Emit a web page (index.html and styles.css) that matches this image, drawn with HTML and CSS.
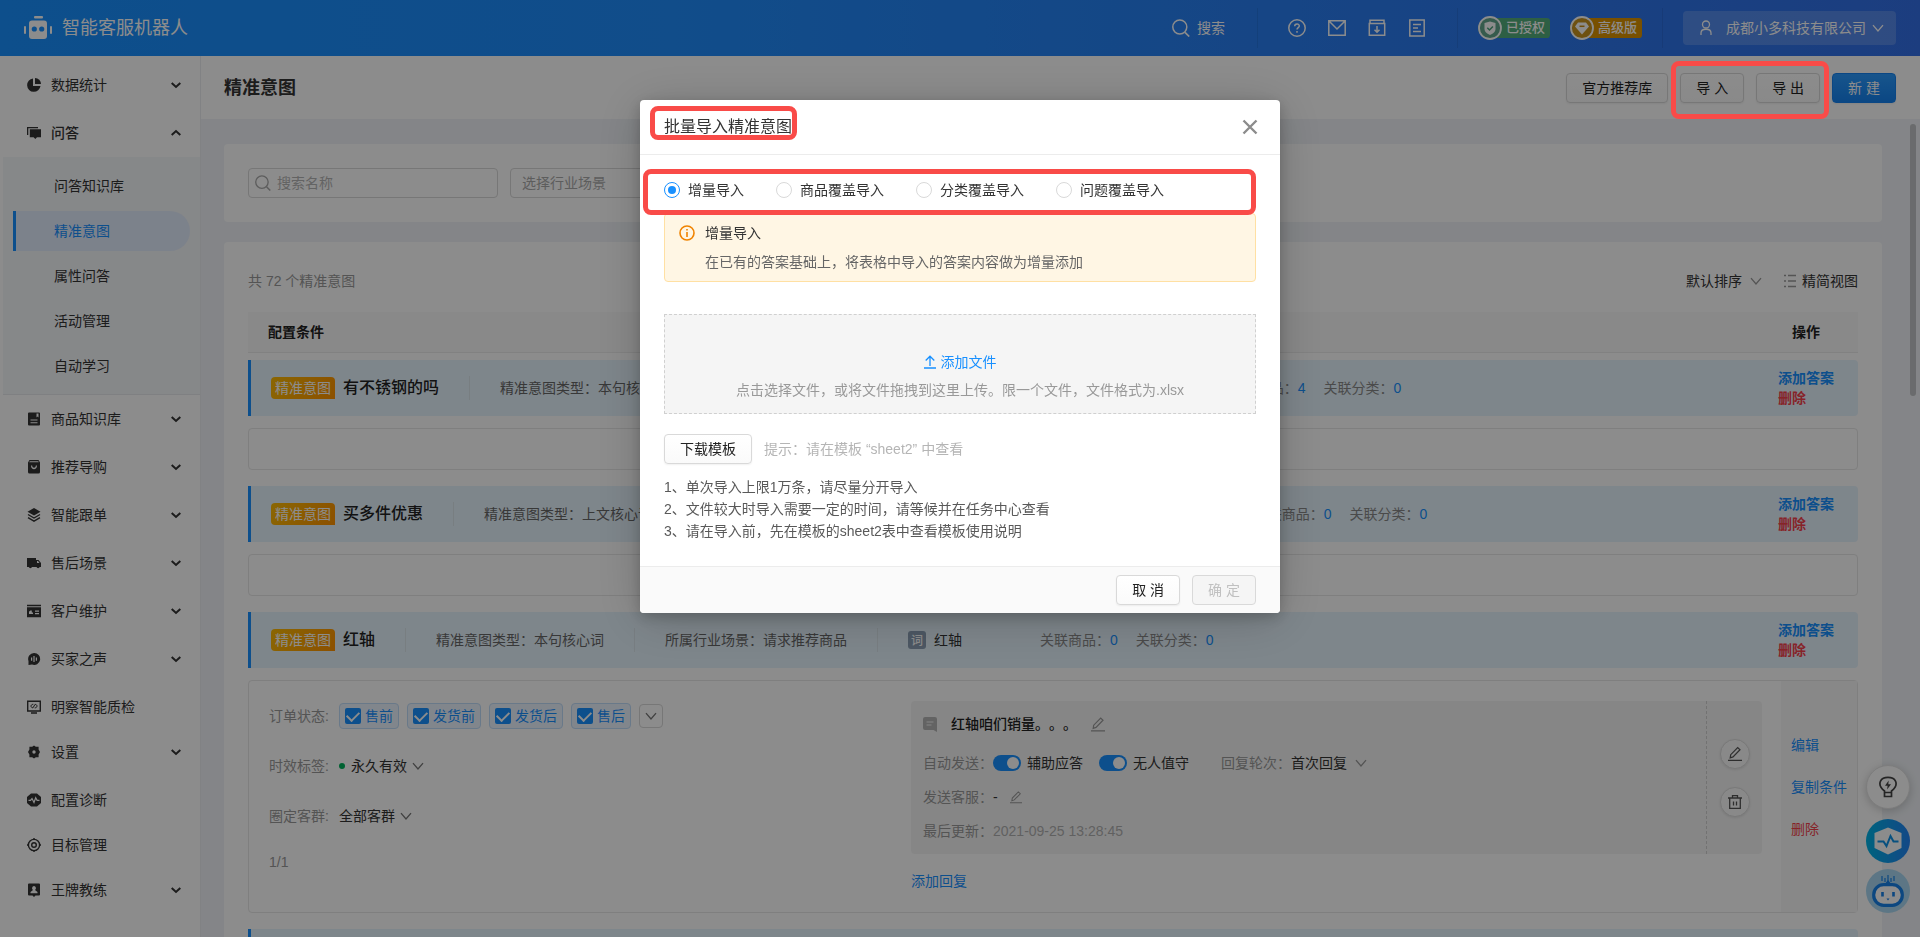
FILE: index.html
```html
<!DOCTYPE html>
<html lang="zh-CN">
<head>
<meta charset="utf-8">
<title>智能客服机器人 - 精准意图</title>
<link rel="stylesheet" href="styles.css">
</head>
<body>
<svg class="sprite" aria-hidden="true">
  <symbol id="down" viewBox="0 0 12 12"><path d="M1 3.2 6 9l5-5.8" fill="none" stroke="currentColor" stroke-width="1.3"/></symbol>
  <symbol id="caret" viewBox="0 0 12 12"><path d="M1.7 4 6 8l4.300-4" fill="none" stroke="currentColor" stroke-width="2"/></symbol>
  <symbol id="edit" viewBox="0 0 14 15"><path d="M2.200 11.800 2.700 8.700 9.700 1.500l2.300 2.200-7 7.200zM0 14.300h14" fill="none" stroke="currentColor" stroke-width="1.200"/></symbol>
  <symbol id="search" viewBox="0 0 18 18"><circle cx="7.800" cy="8" r="7" fill="none" stroke="currentColor" stroke-width="1.500"/><path d="m13 13.300 4.200 4.200" stroke="currentColor" stroke-width="1.700"/></symbol>
</svg>

<div class="app">
  <header class="topbar">
    <svg class="logo" viewBox="0 0 28 24"><g fill="#fff"><rect x="10" y="0" width="9" height="2.500" rx="1"/><rect x="5" y="4.500" width="18" height="18.500" rx="3"/><rect x="0" y="10" width="2" height="8" rx="1"/><rect x="26" y="10" width="2" height="8" rx="1"/></g><circle cx="10.300" cy="13" r="2.600" fill="#1890ff"/><circle cx="17.700" cy="13" r="2.600" fill="#1890ff"/></svg>
    <span class="brand">智能客服机器人</span>
    <button class="top-search"><svg width="18" height="18"><use href="#search"/></svg>搜索</button>
    <i class="top-divider"></i>
    <nav class="top-icons">
      <button aria-label="帮助"><svg viewBox="0 0 18 18"><circle cx="9" cy="9" r="8.200"/><path d="M6.700 7.300c0-3 4.600-3 4.600-.3 0 1.600-2.300 1.700-2.300 3.600M9 12v1.700"/></svg></button>
      <button aria-label="消息"><svg viewBox="0 0 18 18"><path d="M.8 1.800h16.400v14.400H.8zM1 2l8 8 8-8"/></svg></button>
      <button aria-label="下载"><svg viewBox="0 0 18 18"><path d="M1.300 4.500h15.400v11.700H1.300zM2 4.500V1.200h14v3.300M9 7v6M6.500 10.700 9 13.200l2.500-2.500"/></svg></button>
      <button aria-label="文档"><svg viewBox="0 0 18 18"><path d="M1.800 1h14.400v16H1.800zM5 5.500h8M5 9h5M5 12.500h8"/></svg></button>
    </nav>
    <i class="top-divider"></i>
    <div class="badges">
      <span class="badge badge-green"><svg viewBox="0 0 24 24"><circle cx="12" cy="12" r="11" fill="#63a68c" stroke="#fff" stroke-width="1.800"/><path d="M12 5.500 17.500 7v6c0 3-3 5-5.500 6-2.500-1-5.500-3-5.500-6V7z" fill="#fff"/><path d="m9.300 11.800 2.200 2.200 3.400-3.600" fill="none" stroke="#4ca17c" stroke-width="1.500"/></svg>已授权</span>
      <span class="badge badge-gold"><svg viewBox="0 0 24 24"><circle cx="12" cy="12" r="11" fill="#c99420" stroke="#fff" stroke-width="1.800"/><path d="M8 6.500h8l3 4-7 8-7-8z" fill="#fff"/><path d="M9.500 10.300h5" fill="none" stroke="#c98a10" stroke-width="1.500"/></svg>高级版</span>
    </div>
    <i class="top-divider"></i>
    <button class="account"><svg width="12" height="16" viewBox="0 0 12 16" fill="none" stroke="currentColor" stroke-width="1.300"><circle cx="6" cy="4.500" r="3.500"/><path d="M1 15v-2c0-5 10-5 10 0v2"/></svg><span>成都小多科技有限公司</span><svg width="12" height="12"><use href="#down"/></svg></button>
  </header>

  <div class="body">
    <aside class="side">
      <a class="item" href="#"><svg viewBox="0 0 14 14"><path d="M6 .5A6.700 6.700 0 1 0 13.500 8H6z"/><path d="M8 0v6h6A6 6 0 0 0 8 0z"/></svg><span>数据统计</span><svg class="caret"><use href="#caret"/></svg></a>
      <a class="item open" href="#"><svg viewBox="0 0 14 14"><path d="M0 1h11v1.300H1.300V9H0z"/><path d="M2.800 3.200H14v8H10l-1.700 1.800-1.700-1.800H2.800z"/></svg><span>问答</span><svg class="caret"><use href="#caret"/></svg></a>
      <nav class="sub">
        <a href="#">问答知识库</a><a class="active" href="#">精准意图</a><a href="#">属性问答</a><a href="#">活动管理</a><a href="#">自动学习</a>
      </nav>
      <a class="item" href="#"><svg viewBox="0 0 14 14"><path fill-rule="evenodd" d="M2 .5h10a1 1 0 0 1 1 1v11a1 1 0 0 1-1 1H2a1 1 0 0 1-1-1v-11a1 1 0 0 1 1-1zM9.500 1.500v4l1-1 1 1v-4zM3.500 7.500v1h7v-1zM3.500 10.200v1h7v-1z"/></svg><span>商品知识库</span><svg class="caret"><use href="#caret"/></svg></a>
      <a class="item" href="#"><svg viewBox="0 0 14 14"><path fill-rule="evenodd" d="M2.500 0h9L13 2.500V12a1.500 1.500 0 0 1-1.500 1.500h-9A1.500 1.500 0 0 1 1 12V2.500zM2.800 1.300l-.6 1h9.600l-.6-1zM4 5.500c0 5 6 5 6 0H8.800c0 3-3.600 3-3.600 0z"/></svg><span>推荐导购</span><svg class="caret"><use href="#caret"/></svg></a>
      <a class="item" href="#"><svg viewBox="0 0 14 14"><path d="M7 0l6.500 3.700L7 7.500.5 3.700z"/><path d="M1 6.500l6 3.500 6-3.500M1 9.600l6 3.500 6-3.500" fill="none" stroke="currentColor" stroke-width="1.400"/></svg><span>智能跟单</span><svg class="caret"><use href="#caret"/></svg></a>
      <a class="item" href="#"><svg viewBox="0 0 14 14"><path fill-rule="evenodd" d="M0 2h9v2h2.500L14 7v4h-1.300a1.700 1.700 0 0 1-3.200 0H5a1.700 1.700 0 0 1-3.200 0H0zM10 5v2h2.500L11 5z"/></svg><span>售后场景</span><svg class="caret"><use href="#caret"/></svg></a>
      <a class="item" href="#"><svg viewBox="0 0 14 14"><path fill-rule="evenodd" d="M0 .8h14v1.400H0zM0 3.200h14v10H0zM2 8.600c0-2 1.200-1 1.200-2h1.600v2h1.200V10H2zM8 6.500v1.200h4V6.500zM8 9v1.200h4V9z"/></svg><span>客户维护</span><svg class="caret"><use href="#caret"/></svg></a>
      <a class="item" href="#"><svg viewBox="0 0 14 14"><path fill-rule="evenodd" d="M7 1a6 6 0 1 1-2 11.600L1.500 13V9A6 6 0 0 1 7 1zM4 5.500v3.300h1.200V5.500zM6.400 4v6h1.200V4zM8.800 5.500v3.300H10V5.500z"/></svg><span>买家之声</span><svg class="caret"><use href="#caret"/></svg></a>
      <a class="item plain" href="#"><svg class="outline" viewBox="0 0 14 14"><path d="M.7 1.200h12.600v9.800H.7zM4 13h6"/><path d="M6.300 4.300c-3 0-3 3.500-.3 3.500M7.700 7.900c3 0 3-3.500.3-3.500M6 7.800l2-3.400" stroke-width="1"/></svg><span>明察智能质检</span></a>
      <a class="item" href="#"><svg viewBox="0 0 14 14"><path fill-rule="evenodd" d="M7 .6 8.800 1.800h2.800v2.800L13 7l-1.400 2.400v2.800H8.800L7 13.400 5.200 12.200H2.400V9.400L1 7l1.400-2.400V1.800h2.800zM7 5.300a1.700 1.700 0 1 0 0 3.400 1.700 1.700 0 0 0 0-3.400z"/></svg><span>设置</span><svg class="caret"><use href="#caret"/></svg></a>
      <a class="item plain" href="#"><svg viewBox="0 0 14 14"><path d="M4 .5h6L14 4v6l-4 3.500H4L0 10V4z"/><path d="M1.500 7.300h2L5 5.500 7 9.500l1.700-4.700 1.400 2.500h2.400" fill="none" stroke="#fff" stroke-width="1.200"/></svg><span>配置诊断</span></a>
      <a class="item plain" href="#"><svg class="outline" viewBox="0 0 14 14"><circle cx="7" cy="7" r="5.600"/><circle cx="7" cy="7" r="2.300"/><path d="M7 0v1.500M7 12.500V14M0 7h1.500M12.500 7H14"/></svg><span>目标管理</span></a>
      <a class="item" href="#"><svg viewBox="0 0 14 14"><path fill-rule="evenodd" d="M2 .5h10a1 1 0 0 1 1 1v10a1 1 0 0 1-1 1H8.500L7 14l-1.500-1.500H2a1 1 0 0 1-1-1v-10a1 1 0 0 1 1-1zM7 3a2.200 2.200 0 0 0-1 4L3.500 9v1.200h7V9L8 7a2.200 2.200 0 0 0-1-4z"/></svg><span>王牌教练</span><svg class="caret"><use href="#caret"/></svg></a>
    </aside>

    <main class="main">
      <div class="page-head">
        <h1>精准意图</h1>
        <button class="btn">官方推荐库</button>
        <button class="btn">导 入</button>
        <button class="btn">导 出</button>
        <button class="btn primary">新 建</button>
      </div>

      <div class="content">
        <section class="panel filters">
          <label class="field"><svg width="16" height="16"><use href="#search"/></svg><input type="text" placeholder="搜索名称" aria-label="搜索名称"></label>
          <label class="field"><select aria-label="选择行业场景"><option>选择行业场景</option></select></label>
        </section>

        <section class="panel list">
          <div class="list-bar">
            <span class="total">共 72 个精准意图</span>
            <label class="pick"><select aria-label="排序"><option>默认排序</option></select><svg width="12" height="12"><use href="#down"/></svg></label>
            <button class="view"><svg width="12" height="14" viewBox="0 0 12 14" stroke="currentColor" stroke-width="1.300"><path d="M0 1.500h2M4 1.500h8M0 7h2M4 7h8M0 12.500h2M4 12.500h8"/></svg>精简视图</button>
          </div>
          <div class="list-head"><span>配置条件</span><span class="ops">操作</span></div>

          <div class="band">
            <span class="tag">精准意图</span><strong>有不锈钢的吗</strong><i></i>
            <span>精准意图类型：本句核心词</span><i></i><span>所属行业场景：请求推荐商品</span><i></i>
            <em>词</em><span class="word">是不是不锈钢材质 / 钢的</span>
            <span class="rel">关联商品：<a href="#">4</a></span><span class="rel">关联分类：<a href="#">0</a></span>
            <div class="acts"><a href="#">添加答案</a><a class="danger" href="#">删除</a></div>
          </div>
          <div class="empty"></div>

          <div class="band">
            <span class="tag">精准意图</span><strong>买多件优惠</strong><i></i>
            <span>精准意图类型：上文核心词</span><i></i><span>所属行业场景：请求优惠活动</span><i></i>
            <em>词</em><span class="word">买多件有没有优惠 / 多买能优惠</span>
            <span class="rel">关联商品：<a href="#">0</a></span><span class="rel">关联分类：<a href="#">0</a></span>
            <div class="acts"><a href="#">添加答案</a><a class="danger" href="#">删除</a></div>
          </div>
          <div class="empty"></div>

          <div class="band">
            <span class="tag">精准意图</span><strong>红轴</strong><i></i>
            <span>精准意图类型：本句核心词</span><i></i><span>所属行业场景：请求推荐商品</span><i></i>
            <em>词</em><span class="word">红轴</span>
            <span class="rel">关联商品：<a href="#">0</a></span><span class="rel">关联分类：<a href="#">0</a></span>
            <div class="acts"><a href="#">添加答案</a><a class="danger" href="#">删除</a></div>
          </div>
          <div class="detail">
            <div class="detail-main">
              <div class="conds">
                <div class="cond"><span class="lab">订单状态:</span>
                  <label class="chip"><input type="checkbox" checked>售前</label>
                  <label class="chip"><input type="checkbox" checked>发货前</label>
                  <label class="chip"><input type="checkbox" checked>发货后</label>
                  <label class="chip"><input type="checkbox" checked>售后</label>
                  <button class="more" aria-label="更多"><svg width="12" height="12"><use href="#down"/></svg></button>
                </div>
                <div class="cond"><span class="lab">时效标签:</span><b class="dot"></b><label class="pick near"><select aria-label="时效标签"><option>永久有效</option></select><svg width="12" height="12"><use href="#down"/></svg></label></div>
                <div class="cond"><span class="lab">圈定客群:</span><label class="pick near"><select aria-label="圈定客群"><option>全部客群</option></select><svg width="12" height="12"><use href="#down"/></svg></label></div>
                <div class="pages">1/1</div>
              </div>
              <div class="replies">
                <div class="reply">
                  <div class="reply-body">
                    <div class="reply-title"><svg width="14" height="15" viewBox="0 0 14 15"><path d="M2 0h10a2 2 0 0 1 2 2v13l-3.500-2H2a2 2 0 0 1-2-2V2a2 2 0 0 1 2-2z" fill="#b5b5b5"/><path d="M3.500 5h7M3.500 8h5" stroke="#f3f3f3" stroke-width="1.200"/></svg><strong>红轴咱们销量。。。</strong><svg class="pen" width="14" height="16"><use href="#edit"/></svg></div>
                    <div class="line"><span class="lab">自动发送：</span>
                      <label class="toggle"><input type="checkbox" role="switch" checked>辅助应答</label>
                      <label class="toggle"><input type="checkbox" role="switch" checked>无人值守</label>
                      <span class="lab turns">回复轮次：</span><label class="pick"><select aria-label="回复轮次"><option>首次回复</option></select><svg width="12" height="12"><use href="#down"/></svg></label>
                    </div>
                    <div class="line"><span class="lab">发送客服：</span>-<svg class="pen" width="12" height="14"><use href="#edit"/></svg></div>
                    <div class="line faint"><span class="lab">最后更新：</span>2021-09-25 13:28:45</div>
                  </div>
                  <div class="reply-ops">
                    <button aria-label="编辑"><svg width="14" height="15"><use href="#edit"/></svg></button>
                    <button aria-label="删除"><svg width="14" height="14" viewBox="0 0 14 14" fill="none" stroke="currentColor" stroke-width="1.300"><path d="M0 3h14M4.500 3V.7h5V3M1.700 3.500v9.800h10.600V3.500M5.500 6.500v4M8.500 6.500v4"/></svg></button>
                  </div>
                </div>
                <a class="add" href="#">添加回复</a>
              </div>
            </div>
            <div class="detail-ops"><a href="#">编辑</a><a href="#">复制条件</a><a class="danger" href="#">删除</a></div>
          </div>

          <div class="band"></div>
        </section>
      </div>
      <div class="scroll"></div>
    </main>
  </div>

  <div class="floats">
    <button class="float white" aria-label="提示"><svg width="18" height="22" viewBox="0 0 18 22" fill="none" stroke="#444" stroke-width="1.700"><path d="M5.500 15C1 11.500 0 8.500 1.500 5.200 4 .2 14 .2 16.500 5.200 18 8.500 17 11.500 12.500 15v1.500h-7zM5.500 17v3.500h7V17"/><path d="M9.700 4.500 6 9.800h2.600l-.5 3.700L12 8.300H9.300z" fill="#444" stroke="none"/></svg></button>
    <button class="float pulse" aria-label="诊断"><svg width="28" height="28" viewBox="0 0 28 28"><path d="M14 .5 27.500 6v15L14 27.500.5 21V6z" fill="#fff"/><path d="M3.500 14.500h6l3 4.500 4-10 3 5.500h5" fill="none" stroke="#0d93e8" stroke-width="2"/></svg></button>
    <button class="float bot" aria-label="机器人"><svg width="32" height="32" viewBox="0 0 32 32"><path d="M16 0v9M10 1v5M13 3v4M19 3v4M22 1v5" stroke="#1682ea" stroke-width="1.200"/><path d="m12 10 4-5 4 5z" fill="#1682ea"/><rect x="1.700" y="9.700" width="28.600" height="20.600" rx="10" fill="#fff" stroke="#1682ea" stroke-width="3.200"/><path d="M10.500 17v4.500M21.500 17v4.500" stroke="#1682ea" stroke-width="2.600"/><path d="M14.500 23.500h3L16 25.500z" fill="#1682ea"/></svg></button>
  </div>
</div>

<div class="mask">
  <div class="mark mark-actions"></div>
  <section class="modal" role="dialog" aria-modal="true" aria-labelledby="dialog-title">
    <header class="modal-head">
      <h2 id="dialog-title">批量导入精准意图</h2>
      <button class="close" aria-label="关闭"><svg width="16" height="16" viewBox="0 0 16 16"><path d="m1.500 1.500 13 13m0-13-13 13" stroke="#8c8c8c" stroke-width="2.400"/></svg></button>
      <div class="mark mark-title"></div>
    </header>
    <div class="modal-body">
      <div class="modes">
        <label><input type="radio" name="mode" checked>增量导入</label>
        <label><input type="radio" name="mode">商品覆盖导入</label>
        <label><input type="radio" name="mode">分类覆盖导入</label>
        <label><input type="radio" name="mode">问题覆盖导入</label>
        <div class="mark mark-modes"></div>
      </div>
      <div class="notice">
        <svg width="16" height="16" viewBox="0 0 16 16" fill="none" stroke="#f08300" stroke-width="1.600"><circle cx="8" cy="8" r="7"/><path d="M8 7v5M8 4v1.600"/></svg>
        <div><p class="notice-title">增量导入</p><p class="notice-text">在已有的答案基础上，将表格中导入的答案内容做为增量添加</p></div>
      </div>
      <div class="upload">
        <button class="pick-file"><svg width="12" height="14" viewBox="0 0 12 14" fill="none" stroke="currentColor" stroke-width="1.300"><path d="M6 1.500V11M1.700 5.500 6 1.200l4.300 4.300M0 13h12"/></svg>添加文件</button>
        <p>点击选择文件，或将文件拖拽到这里上传。限一个文件，文件格式为.xlsx</p>
      </div>
      <div class="template"><button class="btn">下载模板</button><span>提示：请在模板 “sheet2” 中查看</span></div>
      <div class="notes">
        <p>1、单次导入上限1万条，请尽量分开导入</p>
        <p>2、文件较大时导入需要一定的时间，请等候并在任务中心查看</p>
        <p>3、请在导入前，先在模板的sheet2表中查看模板使用说明</p>
      </div>
    </div>
    <footer class="modal-foot"><button class="btn">取 消</button><button class="btn" disabled>确 定</button></footer>
  </section>
</div>
</body>
</html>
```
FILE: styles.css
```css
* { box-sizing: border-box; }
body {
  margin: 0;
  font: 14px/22px "Liberation Sans", "Noto Sans CJK SC", sans-serif;
  text-spacing-trim: space-all;
  color: #333;
  overflow: hidden;
}
h1, h2, p { margin: 0; }
a { color: #1890ff; text-decoration: none; }
button, input, select { font: inherit; color: inherit; margin: 0; }
button { background: none; border: 0; padding: 0; }
select { appearance: none; border: 0; padding: 0; background: none; }
svg { flex: none; display: block; }
.sprite { position: absolute; width: 0; height: 0; }

.app { height: 100vh; display: flex; flex-direction: column; }
.body { flex: 1; min-height: 0; display: flex; }

/* top bar */
.topbar {
  height: 56px;
  flex: none;
  display: flex;
  align-items: center;
  padding: 0 24px;
  color: #fff;
  background: linear-gradient(90deg, #1890ff, #1f8cfc 35%, #3370e8);
}
.logo { width: 28px; height: 24px; }
.brand { font-size: 18px; margin-left: 10px; flex: 1; }
.top-search { display: flex; align-items: center; gap: 7px; }
.top-divider { width: 1px; height: 40px; background: rgba(0, 0, 0, .08); }
.top-search + .top-divider { margin: 0 30px 0 32px; }
.top-icons { display: flex; gap: 22px; margin-right: 31px; }
.top-icons svg { width: 18px; height: 18px; fill: none; stroke: #fff; stroke-width: 1.5; }
.badges { display: flex; gap: 20px; margin: 0 20px; }
.badge {
  display: flex;
  align-items: center;
  gap: 4px;
  height: 20px;
  padding-right: 5px;
  border-radius: 12px 4px 4px 12px;
  font-size: 13px;
  font-weight: 500;
}
.badge svg { width: 24px; height: 24px; }
.badge-green { background: #52ad7c; }
.badge-gold { background: #db9200; }
.account {
  display: flex;
  align-items: center;
  gap: 14px;
  height: 34px;
  margin-left: 20px;
  padding: 0 12px 0 17px;
  border-radius: 4px;
  background: rgba(255, 255, 255, .18);
}
.account svg:last-child { margin-left: -8px; }

/* side menu */
.side { width: 201px; flex: none; padding: 5px 0 0 3px; border-right: 1px solid #ebedf0; background: #fff; overflow: hidden; }
.item { display: flex; align-items: center; gap: 10px; height: 48px; padding: 0 18px 0 24px; color: #333; }
.item span { flex: 1; }
.item svg { width: 14px; height: 14px; fill: currentColor; }
.item .outline { fill: none; stroke: currentColor; stroke-width: 1.4; }
.item.plain { height: 45px; padding-top: 3px; }
.item .caret { width: 12px; height: 12px; }
.open { font-weight: 500; }
.open .caret { transform: rotate(180deg); }
.sub {
  display: flex;
  flex-direction: column;
  gap: 5px;
  padding: 9px 10px 8px;
  background: #f5f7fa;
  border-bottom: 1px solid #e8eaed;
}
.sub a { height: 40px; line-height: 40px; padding-left: 41px; color: #333; }
.sub .active { padding-left: 38px; border-left: 3px solid #1890ff; border-radius: 0 20px 20px 0; background: #e2edfd; color: #1890ff; }

/* page */
.main { flex: 1; min-width: 0; display: flex; flex-direction: column; position: relative; background: #f0f3f7; }
.page-head { height: 63px; flex: none; display: flex; align-items: center; gap: 12px; padding: 0 24px 0 23px; background: #fff; }
.page-head h1 { flex: 1; font-size: 18px; font-weight: 700; }
.btn {
  height: 30px;
  padding: 0 15px;
  border: 1px solid #d9d9d9;
  border-radius: 4px;
  background: linear-gradient(#fff, #fafafa);
  color: #222;
  box-shadow: 0 1px 2px rgba(0, 0, 0, .06);
}
.btn.primary { border-color: #1482f0; background: linear-gradient(#2b9bff, #1482f0); color: #fff; }
.btn:disabled { background: #f5f5f5; color: #c0c0c0; box-shadow: none; }
.content { flex: 1; min-height: 0; overflow: hidden; padding: 25px 38px 0 23px; }
.panel { background: #fff; border-radius: 4px; padding: 24px; }
.filters { display: flex; gap: 12px; margin-bottom: 20px; }
.field { width: 250px; height: 30px; display: flex; align-items: center; gap: 6px; padding: 0 6px; border: 1px solid #d9d9d9; border-radius: 4px; color: #aaa; }
.field input { flex: 1; min-width: 0; border: 0; padding: 0; background: none; outline: 0; }
.field input::placeholder { color: #b5b5b5; }
.field select { flex: 1; padding-left: 5px; }
.scroll { position: absolute; right: 4px; top: 68px; width: 6px; height: 272px; border-radius: 3px; background: #c1c3c6; }

.list { padding-top: 28px; }
.list-bar { display: flex; align-items: center; height: 22px; margin-bottom: 20px; }
.total { flex: 1; color: #999; }
.pick { display: flex; align-items: center; gap: 8px; color: #333; }
.pick svg { color: #999; }
.pick.near { gap: 5px; }
.pick.near svg { color: #777; }
.view { display: flex; align-items: center; gap: 6px; margin-left: 22px; }
.view svg { color: #999; }
.list-head { display: flex; justify-content: space-between; height: 41px; margin-bottom: 7px; padding: 9px 38px 9px 20px; border-bottom: 1px solid #ececec; background: #fafafa; color: #222; font-weight: 700; }

.band {
  display: flex;
  align-items: center;
  height: 56px;
  padding-left: 20px;
  border-left: 3px solid #1890ff;
  border-radius: 0 4px 4px 0;
  background: #e6f4fd;
  color: #666;
  white-space: nowrap;
}
.tag { height: 22px; padding: 0 4px; border-radius: 4px 4px 0 4px; background: linear-gradient(120deg, #fcbb05, #ff9200); color: #fff; }
.band strong { margin-left: 8px; font-size: 16px; font-weight: 500; color: #222; }
.band i { width: 1px; height: 24px; margin: 0 30px; background: #dbe6ec; }
.band em { width: 18px; height: 18px; border-radius: 3px; background: #8c9fb5; color: #fff; font: 500 12px/18px "Noto Sans CJK SC", sans-serif; text-align: center; }
.word { margin: 0 78px 0 8px; color: #333; }
.rel { margin-right: 18px; color: #888; }
.acts { display: flex; flex-direction: column; margin-left: auto; width: 80px; line-height: 20px; font-weight: 700; }
.danger { color: #f5414b; }
.empty { height: 42px; margin: 12px 0 16px; border: 1px solid #e8e8e8; border-radius: 4px; }

.detail { display: flex; margin: 12px 0 16px; border: 1px solid #e8e8e8; border-radius: 4px; }
.detail-main { flex: 1; display: flex; padding: 20px 19px 20px 20px; }
.conds { width: 43%; display: flex; flex-direction: column; gap: 20px; }
.cond { display: flex; align-items: center; height: 30px; gap: 8px; }
.lab { color: #999; }
.cond .lab { margin-right: 2px; }
.chip { display: flex; align-items: center; gap: 4px; height: 26px; padding: 0 5px; border: 1px solid #bfdcfa; border-radius: 4px; background: #ecf5ff; color: #1890ff; }
.chip input {
  appearance: none;
  width: 16px;
  height: 16px;
  border-radius: 2px;
  background: #1890ff;
  display: grid;
  place-items: center;
}
.chip input::before { content: ""; width: 10px; height: 6px; margin-top: -3px; border: solid #fff; border-width: 0 0 2px 2px; transform: rotate(-45deg); }
.more { width: 24px; height: 24px; display: grid; place-items: center; border: 1px solid #d9d9d9; border-radius: 4px; color: #777; }
.dot { width: 6px; height: 6px; border-radius: 50%; background: #00b35c; margin-right: -2px; }
.pages { color: #999; }
.replies { flex: 1; }
.reply { display: flex; border-radius: 4px; background: #f5f5f5; margin-bottom: 16px; }
.reply-body { flex: 1; padding: 12px; border-right: 1px dashed #d0d0d0; }
.reply-title { display: flex; align-items: center; gap: 14px; margin: 0 0 17px; color: #222; }
.reply-title strong { font-weight: 500; }
.pen { color: #999; }
.line { display: flex; align-items: center; height: 22px; margin-top: 12px; }
.reply-title + .line { margin-top: 0; }
.line .pen { margin-left: 12px; }
.faint { color: #b0b0b0; }
.turns { margin-left: 16px; }
.toggle { display: flex; align-items: center; gap: 6px; margin-right: 16px; }
.toggle input { appearance: none; width: 28px; height: 16px; padding: 2px; border-radius: 8px; background: #1890ff; display: flex; justify-content: flex-end; }
.toggle input::before { content: ""; width: 12px; height: 12px; border-radius: 50%; background: #fff; }
.reply-ops { width: 55px; display: flex; flex-direction: column; align-items: center; justify-content: center; gap: 18px; }
.reply-ops button { width: 30px; height: 30px; display: grid; place-items: center; border: 1px solid #dcdcdc; border-radius: 50%; background: #fafafa; color: #555; box-shadow: 0 1px 3px rgba(0, 0, 0, .1); }
.add { display: block; }
.detail-ops { width: 76px; display: flex; flex-direction: column; justify-content: center; gap: 20px; padding: 0 0 20px 10px; background: #f7f7f7; white-space: nowrap; }

.floats { position: fixed; right: 10px; bottom: 24px; display: flex; flex-direction: column; gap: 6px; }
.float { width: 44px; height: 44px; display: grid; place-items: center; border-radius: 50%; }
.white { margin-bottom: 4px; border: 1px solid #e2e2e2; background: #fff; box-shadow: 0 2px 10px rgba(0, 0, 0, .2); }
.pulse { background: linear-gradient(90deg, #00b4e6, #2484f5); }
.bot { background: #a9d8f2; }

/* dialog */
.mask { position: fixed; inset: 0; display: flex; align-items: flex-start; justify-content: center; padding-top: 100px; background: rgba(0, 0, 0, .45); }
.modal { width: 640px; border-radius: 4px; background: #fff; box-shadow: 0 4px 14px rgba(0, 0, 0, .2), 0 6px 48px rgba(0, 0, 0, .2); }
.modal-head { position: relative; display: flex; align-items: center; justify-content: space-between; height: 55px; padding: 0 22px 0 24px; border-bottom: 1px solid #ececec; }
.modal-head h2 { font-size: 16px; font-weight: 400; color: #333; }
.close { display: grid; }
.modal-body { padding: 24px; }
.modes { position: relative; display: flex; gap: 32px; margin-bottom: 12px; }
.modes label { display: flex; align-items: center; gap: 8px; }
.modes input { appearance: none; width: 16px; height: 16px; border: 1px solid #d9d9d9; border-radius: 50%; display: grid; place-items: center; }
.modes input:checked { border-color: #1890ff; }
.modes input:checked::before { content: ""; width: 8px; height: 8px; border-radius: 50%; background: #1890ff; }
.notice { display: flex; gap: 10px; padding: 8px 14px; border: 1px solid #ffe0a3; border-radius: 4px; background: #fff6e4; }
.notice svg { margin-top: 3px; }
.notice-title { margin-bottom: 7px; }
.notice-text { color: #666; }
.upload { display: flex; flex-direction: column; align-items: center; justify-content: flex-end; gap: 6px; height: 100px; margin: 32px 0 20px; padding-bottom: 12px; border: 1px dashed #d0d0d0; background: #f5f5f5; color: #999; }
.pick-file { display: flex; align-items: center; gap: 5px; color: #1890ff; }
.template { display: flex; align-items: center; gap: 12px; margin-bottom: 12px; color: #b5b5b5; }
.notes { color: #595959; }
.modal-foot { display: flex; justify-content: flex-end; gap: 12px; padding: 8px 24px; border-top: 1px solid #ececec; border-radius: 0 0 4px 4px; background: #fafafa; }

/* red callouts drawn over the controls */
.mark { position: absolute; border: 5px solid #f94b48; border-radius: 8px; pointer-events: none; }
.mark-actions { top: 61px; right: 91px; width: 158px; height: 58px; }
.mark-title { top: 6px; left: 10px; width: 147px; height: 34px; }
.mark-modes { top: -10px; left: -21px; right: 0; height: 46px; }
```
